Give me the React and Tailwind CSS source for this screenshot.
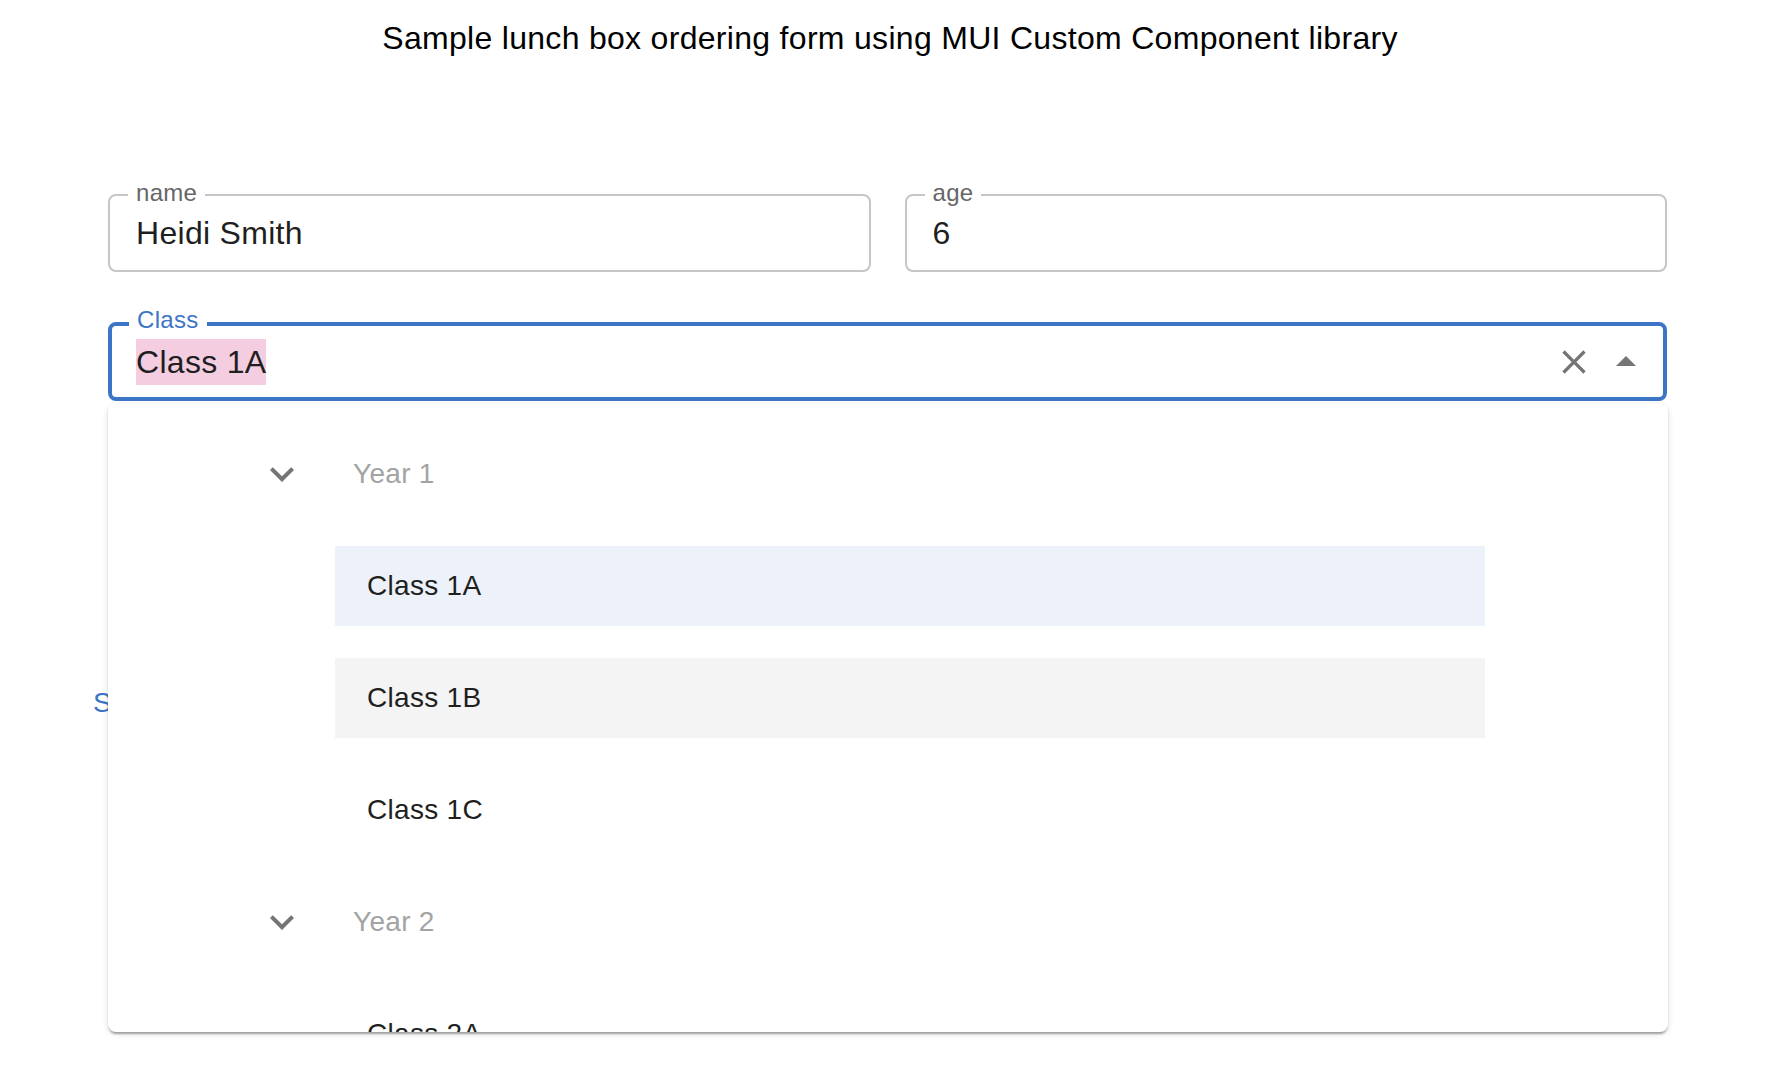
import React from "react";

function CloseIcon() {
  return (
    <svg width="40" height="40" viewBox="0 0 24 24" fill="#757575">
      <path d="M19 6.41 17.59 5 12 10.59 6.41 5 5 6.41 10.59 12 5 17.59 6.41 19 12 13.41 17.59 19 19 17.59 13.41 12z" />
    </svg>
  );
}

function ArrowUpIcon() {
  return (
    <svg width="48" height="48" viewBox="0 0 24 24" fill="#757575">
      <path d="m7 14 5-5 5 5z" />
    </svg>
  );
}

function ExpandMoreIcon() {
  return (
    <svg width="48" height="48" viewBox="0 0 24 24" fill="#757575">
      <path d="M16.59 8.59 12 13.17 7.41 8.59 6 10l6 6 6-6z" />
    </svg>
  );
}

function Field({ label, value }) {
  return (
    <div className="relative flex h-[78px] items-center rounded-[8px] border-2 border-[#c6c6c6] pl-[26px]">
      <span className="absolute left-[18px] top-[-15px] bg-white px-[8px] text-[24px] leading-[24px] text-[#666666]">
        {label}
      </span>
      <span className="text-[32px] leading-[46px] text-[#1f1f1f]">{value}</span>
    </div>
  );
}

function GroupHeader({ label }) {
  return (
    <div className="flex h-[80px] shrink-0 items-center">
      <div className="ml-[150px] h-[48px] w-[48px]">
        <ExpandMoreIcon />
      </div>
      <span className="ml-[47px] text-[28px] leading-[32px] text-[#a3a3a3]">{label}</span>
    </div>
  );
}

function Option({ label, bg }) {
  return (
    <div className={`ml-[227px] flex h-[80px] w-[1150px] shrink-0 items-center pl-[32px] text-[28px] leading-[32px] text-[#1f1f1f] ${bg}`}>
      {label}
    </div>
  );
}

export default function App() {
  return (
    <div className="relative h-[1090px] w-[1780px] overflow-hidden bg-white font-['Liberation_Sans',Arial,sans-serif] tracking-[0.3px]">
      <h1 className="pt-[18px] text-center text-[32px] leading-[40px] text-black">
        Sample lunch box ordering form using MUI Custom Component library
      </h1>

      <div className="ml-[108px] mt-[136px] w-[1559px]">
        <div className="grid grid-cols-2 gap-[34px]">
          <Field label="name" value="Heidi Smith" />
          <Field label="age" value="6" />
        </div>

        <div className="relative mt-[50px] flex h-[79px] items-center rounded-[8px] border-4 border-[#3c75c6] pl-[24px] pr-[13px]">
          <span className="absolute left-[17px] top-[-18px] bg-white px-[8px] text-[24px] leading-[24px] text-[#3c75c6]">
            Class
          </span>
          <span className="inline-block bg-[#f4cee0] text-[32px] leading-[46px] text-[#1f1f1f]">Class 1A</span>
          <div className="ml-auto flex items-center gap-[8px]">
            <div className="h-[40px] w-[40px]">
              <CloseIcon />
            </div>
            <div className="h-[48px] w-[48px]">
              <ArrowUpIcon />
            </div>
          </div>
        </div>

        <div className="-ml-[15px] mt-[288px] text-[28px] leading-[28px] tracking-[0.8px] text-[#3c75c6]">SUBMIT</div>
      </div>

      <div className="absolute left-[108px] top-[404px] h-[628px] w-[1560px] overflow-hidden rounded-[8px] bg-white shadow-[0_4px_2px_-2px_rgba(0,0,0,0.2),0_2px_2px_0_rgba(0,0,0,0.14),0_2px_6px_0_rgba(0,0,0,0.12)]">
        <div className="flex flex-col gap-[32px] pt-[30px]">
          <GroupHeader label="Year 1" />
          <Option label="Class 1A" bg="bg-[#edf2fa]" />
          <Option label="Class 1B" bg="bg-[#f4f4f4]" />
          <Option label="Class 1C" bg="" />
          <GroupHeader label="Year 2" />
          <Option label="Class 2A" bg="" />
        </div>
      </div>
    </div>
  );
}
